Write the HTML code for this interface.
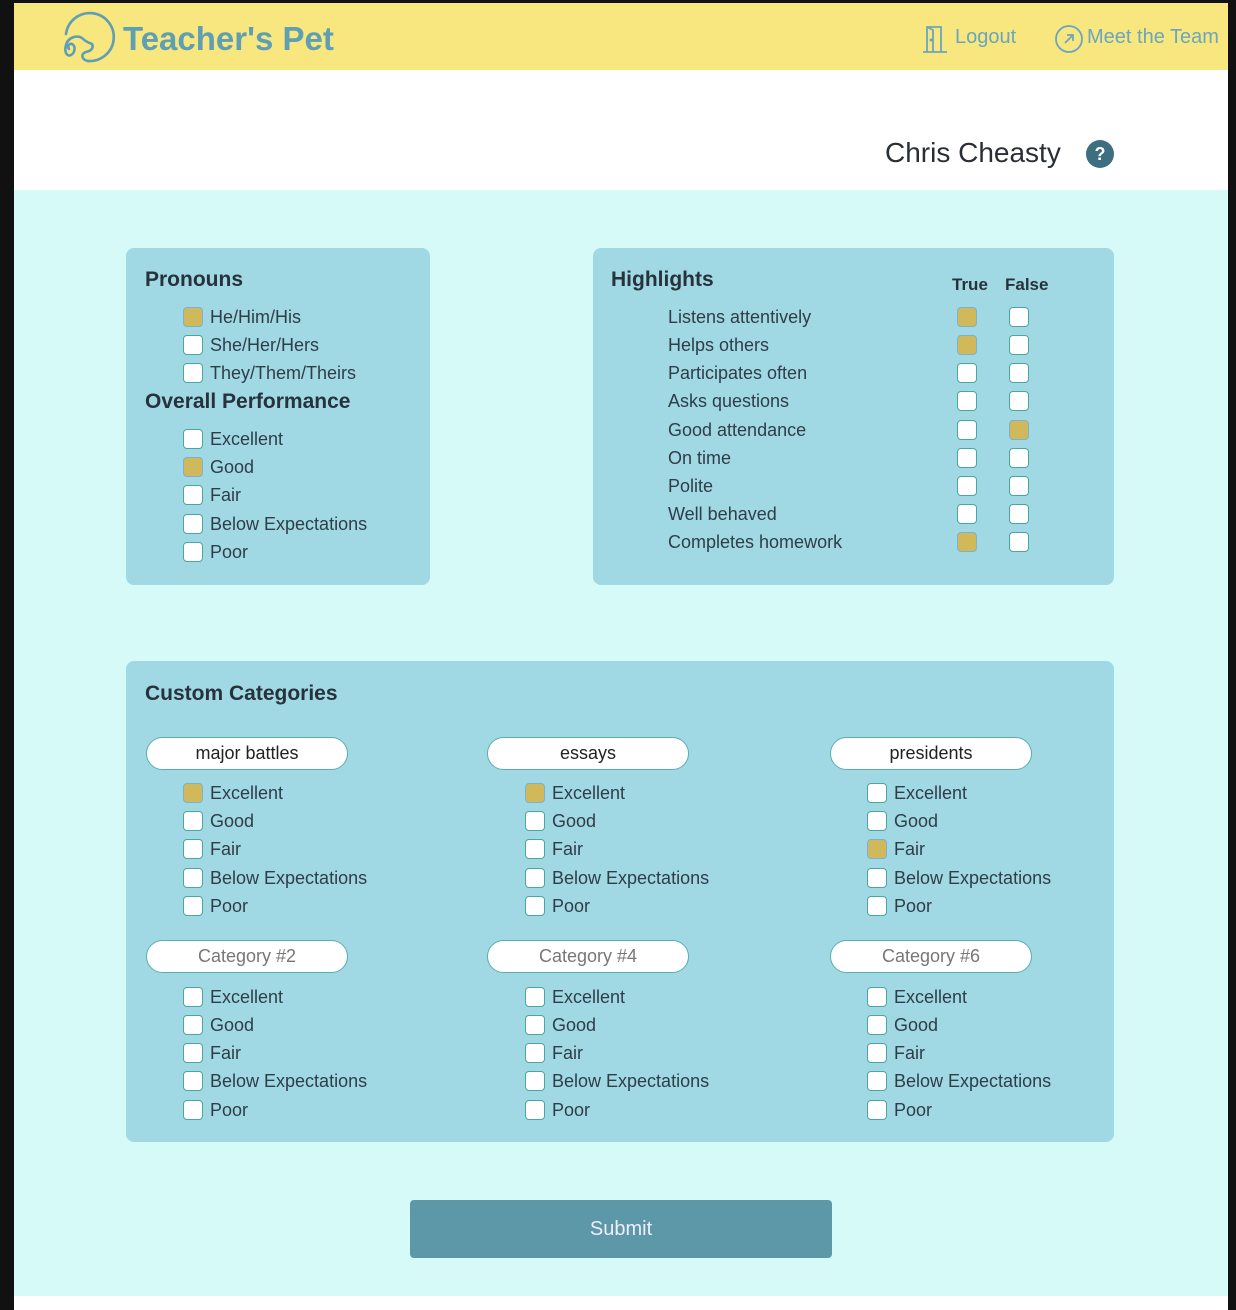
<!DOCTYPE html>
<html><head><meta charset="utf-8"><style>
*{margin:0;padding:0;box-sizing:border-box}
body{width:1236px;height:1310px;position:relative;background:#111;font-family:"Liberation Sans",sans-serif;overflow:hidden}
.main{position:absolute;left:14px;top:3px;width:1214px;height:1307px;background:#fff}
.hdr{position:absolute;left:14px;top:3px;width:1214px;height:67px;background:#f8e67f}
.cyan{position:absolute;left:14px;top:190px;width:1214px;height:1106px;background:#d6faf8}
.panel{position:absolute;background:#a0d9e3;border-radius:8px}
.h{position:absolute;font-size:21px;font-weight:bold;color:#27323c;line-height:26px}
.r{position:absolute;height:22px;display:flex;align-items:center;font-size:18px;color:#2f3d49;white-space:nowrap}
.r i,.cb{display:inline-block;width:20px;height:20px;border:1.5px solid #4aa6a0;border-radius:4px;background:#fff;margin-right:7px;flex:none}
.cb{position:absolute;margin:0}
.c{background:#d0b95a!important;border-color:#7fb0d0!important}
.pill{position:absolute;width:202px;height:33px;border:1.5px solid #5aaeb0;border-radius:17px;background:#fff;text-align:center;line-height:30px;font-size:18px;color:#222}
.pill.g{color:#777}
.nav{position:absolute;font-size:20px;color:#6aa6bf;top:26px}
</style></head><body>
<div class="main"></div>
<div class="hdr"></div>
<svg style="position:absolute;left:58px;top:10px" width="60" height="56" viewBox="0 0 60 56">
<g fill="none" stroke="#5e9fb4" stroke-width="2.6" stroke-linecap="round">
<path d="M8 24 A24 24 0 1 1 30 51"/>
<path d="M30 51 C24 50 22 44 28 42 C33 41 36 38 34 34 C31 33 27 31 24 28 C19 25 10 27 8 35 C6 42 9 47 13 45 C17 43 18 36 14 34 C11 33 9 37 11 39"/>
</g></svg>
<div style="position:absolute;left:123px;top:20px;font-size:33px;font-weight:bold;color:#5e9fb4">Teacher's Pet</div>
<svg style="position:absolute;left:922px;top:24px" width="26" height="30" viewBox="0 0 26 30"><g fill="none" stroke="#6aa6bf" stroke-width="1.8"><path d="M5 28V3h14v25M1 28h24M5 3l6 3v22"/><circle cx="9" cy="16" r="0.6"/></g></svg>
<div class="nav" style="left:955px">Logout</div>
<svg style="position:absolute;left:1054px;top:24px" width="30" height="30" viewBox="0 0 30 30"><g fill="none" stroke="#6aa6bf" stroke-width="1.8"><circle cx="15" cy="15" r="13"/><path d="M11 19l8-8M13 11h6v6"/></g></svg>
<div class="nav" style="left:1087px">Meet the Team</div>
<div style="position:absolute;left:885px;top:137px;font-size:28px;color:#2a2f35">Chris Cheasty</div>
<div style="position:absolute;left:1086px;top:140px;width:28px;height:28px;border-radius:50%;background:#3d6f80;color:#fff;font-weight:bold;font-size:18px;text-align:center;line-height:28px">?</div>
<div class="cyan"></div>

<div class="panel" style="left:126px;top:248px;width:304px;height:337px"></div>
<div class="h" style="left:145px;top:267px">Pronouns</div>
<div class="r" style="left:183px;top:306px"><i class="c"></i>He/Him/His</div>
<div class="r" style="left:183px;top:334px"><i></i>She/Her/Hers</div>
<div class="r" style="left:183px;top:362px"><i></i>They/Them/Theirs</div>
<div class="h" style="left:145px;top:389px">Overall Performance</div>
<div class="r" style="left:183px;top:428px"><i></i>Excellent</div>
<div class="r" style="left:183px;top:456px"><i class="c"></i>Good</div>
<div class="r" style="left:183px;top:484px"><i></i>Fair</div>
<div class="r" style="left:183px;top:513px"><i></i>Below Expectations</div>
<div class="r" style="left:183px;top:541px"><i></i>Poor</div>

<div class="panel" style="left:593px;top:248px;width:521px;height:337px"></div>
<div class="h" style="left:611px;top:267px">Highlights</div>
<div class="h" style="left:952px;top:272px;font-size:17px">True</div>
<div class="h" style="left:1005px;top:272px;font-size:17px">False</div>
<div class="r" style="left:668px;top:306px">Listens attentively</div>
<div class="r" style="left:668px;top:334px">Helps others</div>
<div class="r" style="left:668px;top:362px">Participates often</div>
<div class="r" style="left:668px;top:390px">Asks questions</div>
<div class="r" style="left:668px;top:419px">Good attendance</div>
<div class="r" style="left:668px;top:447px">On time</div>
<div class="r" style="left:668px;top:475px">Polite</div>
<div class="r" style="left:668px;top:503px">Well behaved</div>
<div class="r" style="left:668px;top:531px">Completes homework</div>
<i class="cb c" style="left:957px;top:307px"></i><i class="cb" style="left:1009px;top:307px"></i>
<i class="cb c" style="left:957px;top:335px"></i><i class="cb" style="left:1009px;top:335px"></i>
<i class="cb" style="left:957px;top:363px"></i><i class="cb" style="left:1009px;top:363px"></i>
<i class="cb" style="left:957px;top:391px"></i><i class="cb" style="left:1009px;top:391px"></i>
<i class="cb" style="left:957px;top:420px"></i><i class="cb c" style="left:1009px;top:420px"></i>
<i class="cb" style="left:957px;top:448px"></i><i class="cb" style="left:1009px;top:448px"></i>
<i class="cb" style="left:957px;top:476px"></i><i class="cb" style="left:1009px;top:476px"></i>
<i class="cb" style="left:957px;top:504px"></i><i class="cb" style="left:1009px;top:504px"></i>
<i class="cb c" style="left:957px;top:532px"></i><i class="cb" style="left:1009px;top:532px"></i>

<div class="panel" style="left:126px;top:661px;width:988px;height:481px"></div>
<div class="h" style="left:145px;top:681px">Custom Categories</div>

<div class="pill" style="left:146px;top:737px">major battles</div>
<div class="r" style="left:183px;top:782px"><i class="c"></i>Excellent</div>
<div class="r" style="left:183px;top:810px"><i></i>Good</div>
<div class="r" style="left:183px;top:838px"><i></i>Fair</div>
<div class="r" style="left:183px;top:867px"><i></i>Below Expectations</div>
<div class="r" style="left:183px;top:895px"><i></i>Poor</div>
<div class="pill g" style="left:146px;top:940px">Category #2</div>
<div class="r" style="left:183px;top:986px"><i></i>Excellent</div>
<div class="r" style="left:183px;top:1014px"><i></i>Good</div>
<div class="r" style="left:183px;top:1042px"><i></i>Fair</div>
<div class="r" style="left:183px;top:1070px"><i></i>Below Expectations</div>
<div class="r" style="left:183px;top:1099px"><i></i>Poor</div>

<div class="pill" style="left:487px;top:737px">essays</div>
<div class="r" style="left:525px;top:782px"><i class="c"></i>Excellent</div>
<div class="r" style="left:525px;top:810px"><i></i>Good</div>
<div class="r" style="left:525px;top:838px"><i></i>Fair</div>
<div class="r" style="left:525px;top:867px"><i></i>Below Expectations</div>
<div class="r" style="left:525px;top:895px"><i></i>Poor</div>
<div class="pill g" style="left:487px;top:940px">Category #4</div>
<div class="r" style="left:525px;top:986px"><i></i>Excellent</div>
<div class="r" style="left:525px;top:1014px"><i></i>Good</div>
<div class="r" style="left:525px;top:1042px"><i></i>Fair</div>
<div class="r" style="left:525px;top:1070px"><i></i>Below Expectations</div>
<div class="r" style="left:525px;top:1099px"><i></i>Poor</div>

<div class="pill" style="left:830px;top:737px">presidents</div>
<div class="r" style="left:867px;top:782px"><i></i>Excellent</div>
<div class="r" style="left:867px;top:810px"><i></i>Good</div>
<div class="r" style="left:867px;top:838px"><i class="c"></i>Fair</div>
<div class="r" style="left:867px;top:867px"><i></i>Below Expectations</div>
<div class="r" style="left:867px;top:895px"><i></i>Poor</div>
<div class="pill g" style="left:830px;top:940px">Category #6</div>
<div class="r" style="left:867px;top:986px"><i></i>Excellent</div>
<div class="r" style="left:867px;top:1014px"><i></i>Good</div>
<div class="r" style="left:867px;top:1042px"><i></i>Fair</div>
<div class="r" style="left:867px;top:1070px"><i></i>Below Expectations</div>
<div class="r" style="left:867px;top:1099px"><i></i>Poor</div>

<div style="position:absolute;left:410px;top:1200px;width:422px;height:58px;background:#5d98a8;border-radius:4px;color:#eef;font-size:20px;text-align:center;line-height:58px">Submit</div>
</body></html>
